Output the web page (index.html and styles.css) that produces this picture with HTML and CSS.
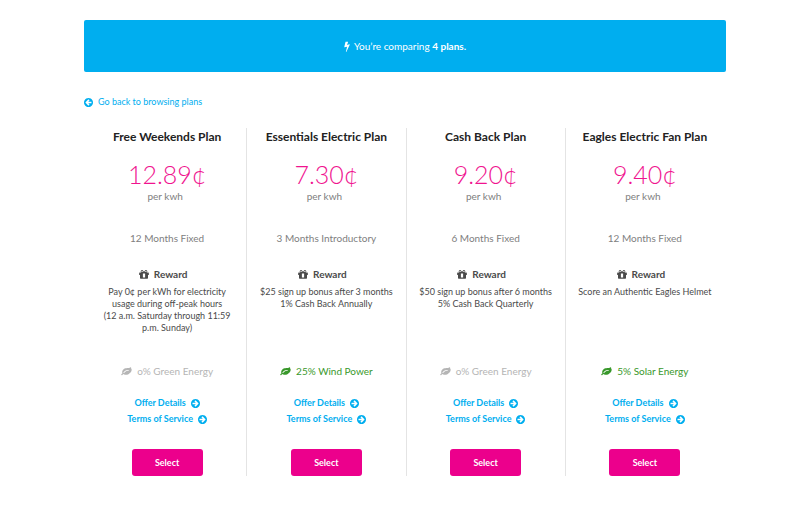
FILE: index.html
```
<!DOCTYPE html>
<html lang="en">
<head>
<meta charset="utf-8">
<meta name="viewport" content="width=device-width, initial-scale=1">
<title>Compare plans</title>
<link rel="stylesheet" href="styles.css">
</head>
<body>
<svg class="sprite" aria-hidden="true">
  <symbol id="bolt" viewBox="0 0 896 1792"><path d="M885 566q18 20 7 44l-540 1157q-13 25-42 25-4 0-14-2-17-5-25.500-19t-4.500-30l197-808-406 101q-4 1-12 1-18 0-31-11-18-15-13-39l201-825q4-16 16-26t28-10h328q19 0 32 12.500t13 29.500q0 8-5 18l-171 463 396-98q8-2 12-2 19 0 34 15z"/></symbol>
  <symbol id="arrow" viewBox="0 128 1536 1536"><path d="M1285 896q0-27-18-45L905 489l-91-91q-18-18-45-18t-45 18l-91 91q-18 18-18 45t18 45l189 189H320q-26 0-45 19t-19 45v128q0 26 19 45t45 19h502l-189 189q-19 19-19 45t19 45l91 91q18 18 45 18t45-18l91-91 362-362q18-18 18-45zM1536 896q0 209-103 385.500t-279.500 279.500-385.500 103-385.500-103-279.500-279.500-103-385.500 103-385.500 279.500-279.500 385.500-103 385.500 103 279.500 279.500 103 385.500z"/></symbol>
  <symbol id="gift" viewBox="0 0 18 16"><path fill-rule="evenodd" d="M1 4.500h3.500A2.300 2.300 0 1 1 7.400 1.100L9 3l1.600-1.900A2.300 2.300 0 1 1 13.500 4.500H17a.7.7 0 0 1 .7.700V9H16.200v5.500a1.200 1.200 0 0 1-1.200 1.200H3a1.200 1.200 0 0 1-1.200-1.200V9H.3V5.200A.7.700 0 0 1 1 4.500zM5.300 1.600a1 1 0 0 0 0 2.100h2.300L6.200 2a1 1 0 0 0-.9-.4zM12.700 1.600a1 1 0 0 0-.9.400L10.400 3.700h2.300a1 1 0 0 0 0-2.100zM7 6v7.500h4V6z"/></symbol>
  <symbol id="leaf" viewBox="0 128 1792 1536"><path d="M1280 704q0-26-19-45t-45-19q-172 0-318 49.500t-259.500 134-235.500 219.500q-19 21-19 45 0 26 19 45t45 19q24 0 45-19 27-24 74-71t67-66q137-124 268.500-176t313.500-52q26 0 45-19t19-45zm512-198q0 95-20 193-46 224-184.500 383t-357.500 268q-214 108-438 108-148 0-286-47-15-5-88-42t-96-37q-16 0-39.500 32t-45 70-52.500 70-60 32q-43 0-63.500-17.500t-45.500-59.500q-2-4-6-11t-5.500-10-3-9.500-1.500-13.500q0-35 31-73.500t68-65.500 68-56 31-48q0-4-14-38t-16-44q-9-51-9-104 0-115 43.500-220t119-184.500 170.500-139 204-95.500q55-18 145-25.500t179.500-9 178.500-6 163.500-24 113.500-56.500q7-7 16-16t18-17 20-17.500 24-12.500 29.500-3.500q51 0 82.500 69t40.500 148.500 9 137.500z"/></symbol>
</svg>
<div class="page">
  <header class="banner">
    <svg class="icon-bolt" aria-hidden="true"><use href="#bolt"/></svg>
    <p>You’re comparing <strong>4 plans.</strong></p>
  </header>
  <a class="link back" href="#"><svg class="icon-arrow flip" aria-hidden="true"><use href="#arrow"/></svg>Go back to browsing plans</a>
  <main class="plans">
    <section class="plan">
      <h2>Free Weekends Plan</h2>
      <p class="price">12.89¢</p>
      <p class="unit">per kwh</p>
      <p class="term">12 Months Fixed</p>
      <h3><svg class="icon-gift" aria-hidden="true"><use href="#gift"/></svg>Reward</h3>
      <p class="reward">Pay 0¢ per kWh for electricity<br>usage during off-peak hours<br>(12 a.m. Saturday through 11:59<br>p.m. Sunday)</p>
      <p class="energy"><svg class="icon-leaf" aria-hidden="true"><use href="#leaf"/></svg>o% Green Energy</p>
      <a class="link" href="#">Offer Details<svg class="icon-arrow" aria-hidden="true"><use href="#arrow"/></svg></a>
      <a class="link" href="#">Terms of Service<svg class="icon-arrow" aria-hidden="true"><use href="#arrow"/></svg></a>
      <button type="button">Select</button>
    </section>
    <section class="plan">
      <h2>Essentials Electric Plan</h2>
      <p class="price">7.30¢</p>
      <p class="unit">per kwh</p>
      <p class="term">3 Months Introductory</p>
      <h3><svg class="icon-gift" aria-hidden="true"><use href="#gift"/></svg>Reward</h3>
      <p class="reward">$25 sign up bonus after 3 months<br>1% Cash Back Annually</p>
      <p class="energy green"><svg class="icon-leaf" aria-hidden="true"><use href="#leaf"/></svg>25% Wind Power</p>
      <a class="link" href="#">Offer Details<svg class="icon-arrow" aria-hidden="true"><use href="#arrow"/></svg></a>
      <a class="link" href="#">Terms of Service<svg class="icon-arrow" aria-hidden="true"><use href="#arrow"/></svg></a>
      <button type="button">Select</button>
    </section>
    <section class="plan">
      <h2>Cash Back Plan</h2>
      <p class="price">9.20¢</p>
      <p class="unit">per kwh</p>
      <p class="term">6 Months Fixed</p>
      <h3><svg class="icon-gift" aria-hidden="true"><use href="#gift"/></svg>Reward</h3>
      <p class="reward">$50 sign up bonus after 6 months<br>5% Cash Back Quarterly</p>
      <p class="energy"><svg class="icon-leaf" aria-hidden="true"><use href="#leaf"/></svg>o% Green Energy</p>
      <a class="link" href="#">Offer Details<svg class="icon-arrow" aria-hidden="true"><use href="#arrow"/></svg></a>
      <a class="link" href="#">Terms of Service<svg class="icon-arrow" aria-hidden="true"><use href="#arrow"/></svg></a>
      <button type="button">Select</button>
    </section>
    <section class="plan">
      <h2>Eagles Electric Fan Plan</h2>
      <p class="price">9.40¢</p>
      <p class="unit">per kwh</p>
      <p class="term">12 Months Fixed</p>
      <h3><svg class="icon-gift" aria-hidden="true"><use href="#gift"/></svg>Reward</h3>
      <p class="reward">Score an Authentic Eagles Helmet</p>
      <p class="energy green"><svg class="icon-leaf" aria-hidden="true"><use href="#leaf"/></svg>5% Solar Energy</p>
      <a class="link" href="#">Offer Details<svg class="icon-arrow" aria-hidden="true"><use href="#arrow"/></svg></a>
      <a class="link" href="#">Terms of Service<svg class="icon-arrow" aria-hidden="true"><use href="#arrow"/></svg></a>
      <button type="button">Select</button>
    </section>
  </main>
</div>
</body>
</html>
```
FILE: styles.css
```
* {
  box-sizing: border-box;
}

body {
  margin: 0;
  background: #fff;
  color: #4a4a4a;
  font: 10px/16px Lato, "Open Sans", sans-serif;
}

h2, h3, p {
  margin: 0;
}

svg {
  fill: currentColor;
  flex: none;
}

.sprite {
  position: absolute;
  width: 0;
  height: 0;
}

.page {
  padding: 20px 84px;
}

.banner {
  display: flex;
  align-items: center;
  justify-content: center;
  gap: 4px;
  min-height: 52px;
  border-radius: 2px;
  background: #00aeef;
  color: #fff;
}

.link {
  display: flex;
  align-items: center;
  gap: 5px;
  color: #00aeef;
  font-size: 9px;
  font-weight: 700;
  text-decoration: none;
}

.back {
  width: fit-content;
  margin: 22px 0 18px;
  font-weight: 400;
}

.icon-bolt {
  width: 6px;
  height: 11px;
}

.icon-arrow {
  width: 9px;
  height: 9px;
}

.flip {
  transform: scaleX(-1);
}

.icon-gift {
  width: 10px;
  height: 9px;
}

.icon-leaf {
  width: 11px;
  height: 9px;
}

.plans {
  display: grid;
  grid-template-columns: repeat(4, 1fr);
  padding: 0 1px 0 4px;
}

.plan {
  display: flex;
  flex-direction: column;
  align-items: center;
  border-right: 1px solid #e4e4e4;
  text-align: center;
}

.plan:last-child {
  border-right-color: transparent;
}

h2 {
  color: #222;
  font-size: 12px;
  line-height: 18px;
}

.price {
  margin-top: 14px;
  color: #f0148f;
  font-size: 25px;
  font-weight: 300;
  line-height: 28px;
}

.unit {
  padding-right: 4px;
  color: #808080;
}

.term {
  margin-top: 26px;
  color: #808080;
}

h3 {
  display: flex;
  align-items: center;
  gap: 5px;
  margin-top: 20px;
  padding-right: 8px;
  font-size: 10px;
}

.reward {
  min-height: 48px;
  margin-top: 4px;
  font-size: 9px;
  line-height: 12px;
}

.energy {
  display: flex;
  align-items: center;
  gap: 5px;
  margin: 29px 0 16px;
  color: #b5b5b5;
}

.green {
  color: #39982b;
}

button {
  width: 71px;
  height: 27px;
  margin-top: 22px;
  padding: 0;
  border: 0;
  border-radius: 3px;
  background: #ec008c;
  color: #fff;
  font: 700 9px/16px Lato, "Open Sans", sans-serif;
}
```
